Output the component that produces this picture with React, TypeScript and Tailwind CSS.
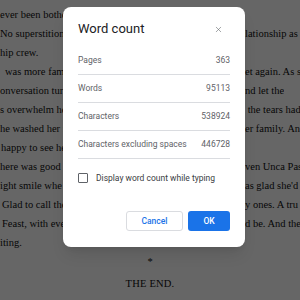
import React from 'react';
import { X } from 'lucide-react';

const lines: { left: string; pl: string; right: string }[] = [
  { left: 'ever been bothe', pl: 'pl-0', right: '' },
  { left: 'No superstitions', pl: 'pl-0', right: 'lationship as' },
  { left: 'hip crew.', pl: 'pl-0', right: '' },
  { left: 'was more fami', pl: 'pl-[5px]', right: 'et again. As s' },
  { left: 'onversation tur', pl: 'pl-0', right: 'nd let the' },
  { left: 's overwhelm he', pl: 'pl-0', right: ' the tears had' },
  { left: 'he washed her f', pl: 'pl-0', right: 'er family. An' },
  { left: 'happy to see he', pl: 'pl-px', right: '' },
  { left: 'here was good f', pl: 'pl-0', right: 'ven Unca Pas' },
  { left: 'ight smile whe', pl: 'pl-0', right: "as glad she'd" },
  { left: 'Glad to call the', pl: 'pl-[2px]', right: 'y ones. A tru' },
  { left: 'Feast, with eve', pl: 'pl-[2px]', right: 'd be. And the' },
  { left: 'iting.', pl: 'pl-0', right: '' },
];

const stats = [
  { label: 'Pages', value: '363' },
  { label: 'Words', value: '95113' },
  { label: 'Characters', value: '538924' },
  { label: 'Characters excluding spaces', value: '446728' },
];

export default function App() {
  return (
    <div className="relative w-[300px] h-[300px] overflow-hidden bg-white">
      {/* document page behind the dialog */}
      <div className="pt-[5px] text-[10.5px] leading-[19px] text-[#111] font-['Liberation_Serif',serif]">
        {lines.map((l, i) => (
          <div key={i} className="flex h-[19px] whitespace-pre">
            <span className={`w-[245px] shrink-0 overflow-hidden ${l.pl}`}>{l.left}</span>
            <span className="overflow-hidden">{l.right}</span>
          </div>
        ))}
        <div className="h-[19px] text-center">*</div>
        <div className="mt-[3px] h-[19px] text-center tracking-[0.2px]">THE END.</div>
      </div>

      {/* scrim */}
      <div className="absolute inset-0 bg-black/60" />

      {/* dialog */}
      <div className="absolute left-[63px] top-[7px] w-[182px] h-[240px] rounded-[8px] bg-white px-[15px] shadow-lg font-['Roboto',sans-serif]">
        <div className="mt-[14px] h-[16px] flex items-center justify-between">
          <span className="text-[13px] text-[#202124]">Word count</span>
          <X className="w-[9px] h-[9px] text-[#5f6368] mr-[7px]" strokeWidth={1.5} />
        </div>
        <div className="mt-[10px]">
          {stats.map((s) => (
            <div
              key={s.label}
              className="h-[28px] flex items-center justify-between border-b border-[#dadce0] text-[8.5px] text-[#5f6368]"
            >
              <span>{s.label}</span>
              <span>{s.value}</span>
            </div>
          ))}
        </div>
        <div className="mt-[10px] h-[18px] flex items-center gap-[8px]">
          <div className="w-[10px] h-[10px] rounded-[1px] border-[1.5px] border-[#5f6368]" />
          <span className="text-[8.5px] text-[#3c4043]">Display word count while typing</span>
        </div>
        <div className="mt-[24px] flex justify-end gap-[5px]">
          <button className="w-[57px] h-[20px] rounded-[3px] border border-[#dadce0] bg-white text-[8.5px] font-medium text-[#1a73e8]">
            Cancel
          </button>
          <button className="w-[42px] h-[20px] rounded-[3px] bg-[#1a73e8] text-[8.5px] font-medium text-white">
            OK
          </button>
        </div>
      </div>
    </div>
  );
}
